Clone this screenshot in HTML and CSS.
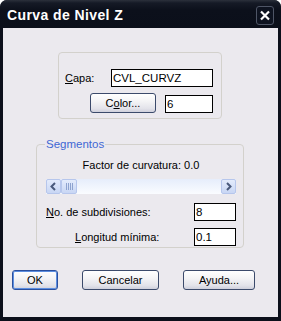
FILE: index.html
```html
<!DOCTYPE html>
<html lang="es">
<head>
  <meta charset="UTF-8">
  <title>Curva de Nivel Z</title>
  <link rel="stylesheet" href="styles.css">
</head>
<body>
  <div class="window">
    <div class="titlebar">
      <span class="title">Curva de Nivel Z</span>
      <button class="close" aria-label="Cerrar">
        <svg width="16" height="17" viewBox="0 0 16 17">
          <path d="M4 4.5 L12 12.5 M12 4.5 L4 12.5" stroke="#fff" stroke-width="2.2" fill="none"/>
        </svg>
      </button>
    </div>

    <div class="client">
      <div class="group layer">
        <div class="row">
          <label for="capa"><u>C</u>apa:</label>
          <input type="text" id="capa" class="field wide" value="CVL_CURVZ">
        </div>
        <div class="row end">
          <button class="btn color"><span>C<u>o</u>lor...</span></button>
          <input type="text" class="field mid" value="6">
        </div>
      </div>

      <fieldset class="segments">
        <legend>Segmentos</legend>
        <div class="factor">Factor de curvatura: 0.0</div>
        <div class="scrollbar">
          <span class="arrow">
            <svg width="13" height="13" viewBox="0 0 13 13"><path d="M8 3 L4.5 6.5 L8 10" stroke="#4a5a7c" stroke-width="2" fill="none"/></svg>
          </span>
          <span class="thumb"><i></i><i></i><i></i><i></i></span>
          <span class="track"></span>
          <span class="arrow">
            <svg width="13" height="13" viewBox="0 0 13 13"><path d="M5 3 L8.5 6.5 L5 10" stroke="#4a5a7c" stroke-width="2" fill="none"/></svg>
          </span>
        </div>
        <div class="row">
          <label><u>N</u>o. de subdivisiones:</label>
          <input type="text" class="field small" value="8">
        </div>
        <div class="row second">
          <label class="indent"><u>L</u>ongitud mínima:</label>
          <input type="text" class="field small" value="0.1">
        </div>
      </fieldset>

      <div class="actions">
        <button class="btn default ok">OK</button>
        <button class="btn cancel">Cancelar</button>
        <button class="btn help">Ayuda...</button>
      </div>
    </div>
  </div>
</body>
</html>
```

FILE: styles.css
```css
body {
  margin: 0;
  font-family: "Liberation Sans", Arial, sans-serif;
  font-size: 11px;
  color: #000;
  background: #ffffff;
}

.window {
  width: 281px;
  height: 321px;
  display: flex;
  flex-direction: column;
  background: #0c101b;
  border-radius: 7px 7px 0 0;
  box-sizing: border-box;
}

.titlebar {
  height: 28px;
  flex: none;
  display: flex;
  justify-content: space-between;
  align-items: flex-start;
  padding: 0 7px;
  border-radius: 7px 7px 0 0;
  background: linear-gradient(#2b303b 0, #151a26 3px, #0c101b 10px, #0b0f1a 100%);
}

.title {
  color: #fff;
  font-weight: bold;
  font-size: 14px;
  letter-spacing: 0.4px;
  line-height: 15px;
  margin-top: 8px;
}

.close {
  margin-top: 6px;
  width: 18px;
  height: 19px;
  padding: 0;
  border: 1px solid #4e5566;
  border-radius: 3px;
  background: #0e1320;
  display: flex;
  align-items: center;
  justify-content: center;
}

.client {
  flex: 1;
  margin: 0 3px 4px;
  background: #ebe9ee;
  display: flex;
  flex-direction: column;
}

.group.layer {
  margin: 24px 0 0 55px;
  width: 164px;
  height: 67px;
  box-sizing: border-box;
  border: 1px solid #d3d1cc;
  border-radius: 4px;
  padding: 16px 8px 0 6px;
}

.row {
  display: flex;
  justify-content: space-between;
  align-items: center;
}

.row.end {
  justify-content: flex-end;
  align-items: flex-end;
  gap: 9px;
  margin-top: 6px;
}

.field {
  box-sizing: border-box;
  height: 18px;
  border: 1px solid #000;
  background: #fff;
  font: inherit;
  font-size: 11.5px;
  padding: 0 1px;
  margin: 0;
  color: #000;
}

.field.wide { width: 102px; }
.field.mid { width: 48px; }
.field.small { width: 42px; }

.btn {
  box-sizing: border-box;
  height: 20px;
  padding: 0;
  font: inherit;
  color: #000;
  border: 1px solid #3b4a6b;
  border-radius: 3px;
  background: linear-gradient(#ffffff 0, #f4f4f6 40%, #e3e3ea 80%, #cfd0dc 100%);
}

.btn.color { width: 66px; }

.segments {
  margin: 19px 0 0 33px;
  width: 208px;
  height: 110px;
  box-sizing: border-box;
  border: 1px solid #d3d1cc;
  border-radius: 4px;
  padding: 0 7px 0 9px;
}

.segments legend {
  color: #3f67d4;
  font-size: 11.5px;
  line-height: 13px;
  padding: 0 1px;
  margin-left: -1px;
}

.factor {
  text-align: center;
  line-height: 14px;
  margin-top: 7px;
}

.scrollbar {
  display: flex;
  height: 15px;
  margin-top: 7px;
  background: linear-gradient(#e6edfb, #fafcff);
}

.arrow,
.thumb {
  box-sizing: border-box;
  width: 15px;
  height: 15px;
  border: 1px solid #b6c6ec;
  border-radius: 2px;
  background: linear-gradient(#e3ebfc, #c8d6f4);
  display: flex;
  align-items: center;
  justify-content: center;
}

.thumb {
  width: 16px;
  gap: 1px;
}

.thumb i {
  width: 1px;
  height: 7px;
  background: #8ea3cf;
}

.track {
  flex: 1;
}

.segments .row {
  margin-top: 9px;
}

.segments .row.second {
  margin-top: 7px;
  justify-content: flex-start;
}

.segments .row.second .field {
  margin-left: auto;
}

.indent {
  padding-left: 29px;
}

.actions {
  display: flex;
  gap: 24px;
  margin: 22px 0 0 9px;
}

.btn.ok { width: 46px; }
.btn.cancel { width: 77px; }
.btn.help { width: 72px; }

.btn.default {
  border: 1px solid #2a4f9e;
  box-shadow: inset 0 0 0 1px #5c8ee0;
}

u {
  text-decoration: underline;
  text-underline-offset: 1px;
}
```
